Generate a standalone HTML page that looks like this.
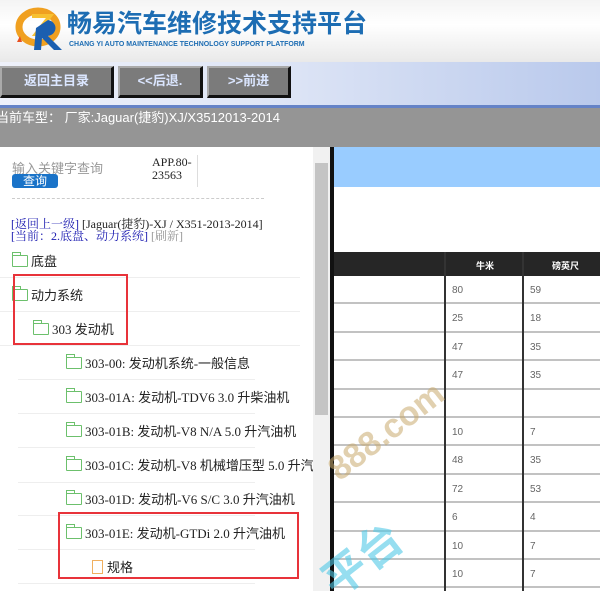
<!DOCTYPE html>
<html><head><meta charset="utf-8"><style>
*{margin:0;padding:0;box-sizing:border-box}
body{width:600px;height:591px;overflow:hidden;position:relative;font-family:"Liberation Serif","Noto Serif CJK SC","Noto Sans CJK SC",serif;background:#fff}
.abs{position:absolute}
.hdr{left:0;top:0;width:600px;height:62px;background:linear-gradient(#f4f4f4,#fff 40%,#e9e9e9)}
.title{left:67px;top:4px;font:bold 25px "Liberation Sans","Noto Sans CJK SC",sans-serif;color:#1d6db3}
.sub{left:69px;top:39px;font:bold 7.5px "Liberation Sans",sans-serif;color:#1d6db3;transform:scaleX(0.93);transform-origin:left}
.nav{left:0;top:62px;width:600px;height:43px;background:linear-gradient(90deg,#eef1fa,#dfe6f6 45%,#b9c9ec)}
.btn{top:66px;height:32px;background:#7b7b7b;border-right:3px solid #111;border-bottom:3px solid #111;border-top:2px solid #aaa;border-left:2px solid #aaa;color:#dbe6ff;font:bold 13px "Liberation Sans","Noto Sans CJK SC",sans-serif;text-align:center;line-height:26px}
.bl{left:0;top:105px;width:600px;height:3px;background:#6583c7}
.gray{left:0;top:108px;width:600px;height:39px;background:#959595;color:#fff;font:13px "Liberation Sans","Noto Sans CJK SC",sans-serif}
.sb{left:313px;top:147px;width:17px;height:444px;background:#f1f1f1}
.thumb{left:315px;top:163px;width:13px;height:252px;background:#c4c4c4}
.vline{left:330px;top:147px;width:4px;height:444px;background:#111}
.blue{left:334px;top:147px;width:266px;height:40px;background:#99ccff}
.th{left:334px;top:252px;width:266px;height:24px;background:#262626;color:#fff;font:bold 9px "Liberation Sans","Noto Sans CJK SC",sans-serif}
.row{position:relative;width:266px;height:28.4px;border-bottom:2px solid #c2c2c2;font:10px "Liberation Sans",sans-serif;color:#666}
.row span{position:absolute;top:9px}
.col{top:252px;width:2px;height:339px;background:#333}
.tree{width:300px;height:34px;border-bottom:1px solid #eee;font-size:13px;color:#222;white-space:nowrap;font-family:"Liberation Serif","Noto Sans CJK SC",sans-serif}
.fold{display:inline-block;width:16px;height:12px;border:1.3px solid #6cc06c;border-radius:1px;vertical-align:-1px;margin-right:3px;position:relative}
.fold:before{content:"";position:absolute;left:-1px;top:-4px;width:7px;height:3px;border:1.3px solid #6cc06c;border-bottom:none}
.red{border:2px solid #e8333a}
</style></head><body>
<div class="abs hdr"></div>
<svg class="abs" style="left:14px;top:6px" width="52" height="46" viewBox="0 0 52 46">
<ellipse cx="24" cy="21" rx="19" ry="16" fill="none" stroke="#f0a020" stroke-width="7"/>
<path d="M18 10 L36 10 L22 28 L32 28" fill="none" stroke="#f7c030" stroke-width="4"/>
<path d="M22 22 L20 44 L27 44 L28 32 L40 44 L48 44 L34 30 C44 28 44 16 34 14 Z" fill="#1b5fb0"/>
<path d="M6 30 L8 36 L3 36 Z" fill="#e85020"/>
</svg>
<div class="abs title">畅易汽车维修技术支持平台</div>
<div class="abs sub">CHANG YI AUTO MAINTENANCE TECHNOLOGY SUPPORT PLATFORM</div>
<div class="abs nav"></div>
<div class="abs btn" style="left:0;width:114px">返回主目录</div>
<div class="abs btn" style="left:118px;width:85px">&lt;&lt;后退.</div>
<div class="abs btn" style="left:207px;width:84px">&gt;&gt;前进</div>
<div class="abs bl"></div>
<div class="abs gray"><span style="position:absolute;left:-4px;top:-1px">当前车型： 厂家:Jaguar(捷豹)XJ/X3512013-2014</span></div>

<div class="abs" style="left:12px;top:158px;font:13px 'Liberation Sans','Noto Sans CJK SC',sans-serif;color:#999">输入关键字查询</div>
<div class="abs" style="left:12px;top:174px;width:46px;height:14px;background:#1a73c8;border-radius:3px;color:#fff;font:12px 'Noto Sans CJK SC',sans-serif;text-align:center;line-height:14px">查询</div>
<div class="abs" style="left:152px;top:156px;font-size:12px;line-height:13px;color:#222">APP.80-<br>23563</div>
<div class="abs" style="left:197px;top:155px;width:1px;height:32px;background:#ddd"></div>
<div class="abs" style="left:12px;top:198px;width:252px;border-top:1px dashed #ccc"></div>
<div class="abs" style="left:11px;top:218px;font-size:12px;line-height:12px;color:#1a1ab0;white-space:nowrap">[返回上一级] <span style="color:#222">[Jaguar(捷豹)-XJ / X351-2013-2014]</span><br>[当前：2.底盘、动力系统] <span style="color:#999">[刷新]</span></div>

<div class="abs tree" style="left:0;top:244px;padding:7px 0 0 12px"><span class="fold"></span>底盘</div>
<div class="abs tree" style="left:0;top:278px;padding:7px 0 0 12px"><span class="fold"></span>动力系统</div>
<div class="abs tree" style="left:0;top:312px;padding:7px 0 0 33px"><span class="fold"></span>303 发动机</div>
<div class="abs tree" style="top:346px;padding:7px 0 0 48px;left:18px;width:237px"><span class="fold"></span>303-00: 发动机系统-一般信息</div>
<div class="abs tree" style="top:380px;padding:7px 0 0 48px;left:18px;width:237px"><span class="fold"></span>303-01A: 发动机-TDV6 3.0 升柴油机</div>
<div class="abs tree" style="top:414px;padding:7px 0 0 48px;left:18px;width:237px"><span class="fold"></span>303-01B: 发动机-V8 N/A 5.0 升汽油机</div>
<div class="abs tree" style="top:448px;padding:7px 0 0 48px;left:18px;width:295px;overflow:hidden;border:none"><span class="fold"></span>303-01C: 发动机-V8 机械增压型 5.0 升汽油机</div>
<div class="abs" style="left:18px;top:482px;width:237px;border-top:1px solid #eee"></div>
<div class="abs tree" style="top:482px;padding:7px 0 0 48px;left:18px;width:237px"><span class="fold"></span>303-01D: 发动机-V6 S/C 3.0 升汽油机</div>
<div class="abs tree" style="top:516px;padding:7px 0 0 48px;left:18px;width:237px"><span class="fold"></span>303-01E: 发动机-GTDi 2.0 升汽油机</div>
<div class="abs tree" style="top:550px;padding:7px 0 0 74px;left:18px;width:237px"><span style="display:inline-block;width:11px;height:14px;border:1.3px solid #f0b060;vertical-align:-2px;margin-right:4px"></span>规格</div>
<div class="abs red" style="left:13px;top:274px;width:115px;height:71px"></div>
<div class="abs red" style="left:58px;top:512px;width:241px;height:67px"></div>

<div class="abs sb"></div>
<div class="abs thumb"></div>
<div class="abs vline"></div>
<div class="abs blue"></div>
<div class="abs th"><span style="position:absolute;left:142px;top:7px">牛米</span><span style="position:absolute;left:218px;top:7px">磅英尺</span></div>
<div class="abs" style="left:334px;top:276px;width:266px">
<div class="row"><span style="left:118px">80</span><span style="left:196px">59</span></div>
<div class="row"><span style="left:118px">25</span><span style="left:196px">18</span></div>
<div class="row"><span style="left:118px">47</span><span style="left:196px">35</span></div>
<div class="row"><span style="left:118px">47</span><span style="left:196px">35</span></div>
<div class="row"></div>
<div class="row"><span style="left:118px">10</span><span style="left:196px">7</span></div>
<div class="row"><span style="left:118px">48</span><span style="left:196px">35</span></div>
<div class="row"><span style="left:118px">72</span><span style="left:196px">53</span></div>
<div class="row"><span style="left:118px">6</span><span style="left:196px">4</span></div>
<div class="row"><span style="left:118px">10</span><span style="left:196px">7</span></div>
<div class="row"><span style="left:118px">10</span><span style="left:196px">7</span></div>
</div>
<div class="abs col" style="left:444px"></div>
<div class="abs col" style="left:522px"></div>
<div class="abs" style="left:345px;top:450px;font:bold 34px 'Liberation Sans',sans-serif;color:rgba(200,170,110,0.55);transform:rotate(-38deg);transform-origin:left bottom;white-space:nowrap">888.com</div>
<div class="abs" style="left:345px;top:545px;font:bold 44px 'Noto Sans CJK SC',sans-serif;color:rgba(80,200,230,0.6);transform:rotate(-38deg);transform-origin:left bottom;white-space:nowrap">平台</div>
</body></html>
